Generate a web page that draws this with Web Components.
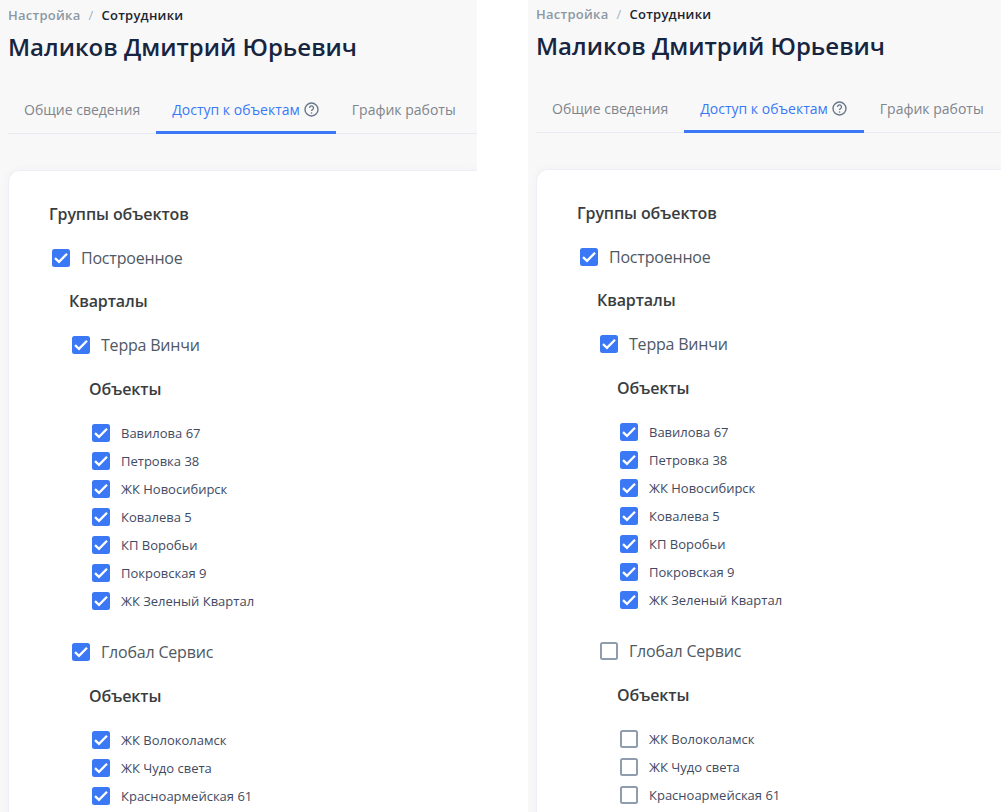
<!DOCTYPE html>
<html lang="ru"><head><meta charset="utf-8"><title>Сотрудники</title>
<style>
html,body{margin:0;padding:0;background:#fff;height:812px;overflow:hidden;font-family:"Open Sans",sans-serif}
#root{display:flex;gap:51px;height:812px;overflow:hidden}
</style></head><body>
<div id="root">
<x-panel></x-panel>
<x-panel second></x-panel>
</div>
<script>
const OBJ1=['Вавилова 67','Петровка 38','ЖК Новосибирск','Ковалева 5','КП Воробьи','Покровская 9','ЖК Зеленый Квартал'];
const OBJ2=['ЖК Волоколамск','ЖК Чудо света','Красноармейская 61'];
class XCheck extends HTMLElement{
  connectedCallback(){
    const s=this.attachShadow({mode:'open'});
    const on=this.hasAttribute('checked');
    const big=this.hasAttribute('big');
    s.innerHTML=`<style>
:host{display:flex;align-items:center;height:28px;color:${big?'#4f5863':'#3f4a63'};font-size:${big?'16px':'13px'};letter-spacing:${big?'-.2px':'0'};line-height:28px;white-space:nowrap}
.b{box-sizing:border-box;width:18px;height:18px;border-radius:2.5px;margin-left:3px;margin-right:11px;flex:none;display:flex;align-items:center;justify-content:center;background:${on?'#3a78f5':'#fff'};border:${on?'0':'2px solid #8f9cae'}}
svg{width:18px;height:18px;display:block}
</style><span class="b">${on?'<svg viewBox="0 0 18 18"><path d="M3 9.2 7 12.8 15 4.8" fill="none" stroke="#fff" stroke-width="2.3"/></svg>':''}</span><slot></slot>`;
  }
}
class XHead extends HTMLElement{
  connectedCallback(){
    this.attachShadow({mode:'open'}).innerHTML=`<style>:host{display:block;font-size:16px;font-weight:600;letter-spacing:-.1px;line-height:24px;color:#3a3d40;white-space:nowrap}</style><slot></slot>`;
  }
}
class XTabs extends HTMLElement{
  connectedCallback(){
    this.attachShadow({mode:'open'}).innerHTML=`<style>
:host{display:flex;height:49px;box-sizing:border-box;border-bottom:1px solid #e9ebf2;font-size:14px;white-space:nowrap;color:#7f858c}
.t{box-sizing:border-box;height:49px;padding:2px 16px 2px;display:flex;align-items:center;gap:4px}
.a{color:#3a78f5;border-bottom:3px solid #3a78f5;padding-bottom:0}
svg{width:15px;height:15px;display:block;margin-right:1px}
</style><div class="t">Общие сведения</div><div class="t a">Доступ к объектам<svg viewBox="0 0 15 15" fill="none" stroke="#69778a"><circle cx="7.5" cy="7.5" r="6.5" stroke-width="1.4"/><path d="M5.6 5.9a1.95 1.95 0 1 1 2.9 1.7c-.7.4-1 .7-1 1.5" stroke-width="1.3"/><circle cx="7.5" cy="11" r=".8" fill="#69778a" stroke="none"/></svg></div><div class="t">График работы</div>`;
  }
}
class XGroup extends HTMLElement{
  connectedCallback(){
    const on=this.getAttribute('state')==='on';
    const items=this.getAttribute('items').split('|');
    const c=on?'checked':'';
    this.attachShadow({mode:'open'}).innerHTML=`<style>
:host{display:block}
x-head{margin:18px 0 0 20px}
.l{display:flex;flex-direction:column;margin:18px 0 0 20px}
</style><x-check big ${c}>${this.getAttribute('name')}</x-check><x-head>Объекты</x-head><div class="l">${items.map(i=>`<x-check ${c}>${i}</x-check>`).join('')}</div>`;
  }
}
class XCard extends HTMLElement{
  connectedCallback(){
    this.attachShadow({mode:'open'}).innerHTML=`<style>
:host{display:block;box-sizing:border-box;background:#fff;border:1px solid #eeeef4;border-right:0;border-radius:12px 0 0 0;padding:31px 0 0 40px;box-shadow:0 0 8px rgba(60,70,100,.04);height:760px}
.top{margin-top:18px}
.q{margin:17px 0 0 20px}
.g{margin:18px 0 0 20px}
</style><x-head>Группы объектов</x-head><x-check class="top" big checked>Построенное</x-check><x-head class="q">Кварталы</x-head><div class="g"><slot></slot></div>`;
  }
}
class XPanel extends HTMLElement{
  connectedCallback(){
    const second=this.hasAttribute('second');
    const s=this.attachShadow({mode:'open'});
    s.innerHTML=`<style>
:host{display:block;width:${second?'473px':'477px'};flex:none;height:812px;overflow:hidden;background:#f8f8f9;box-sizing:border-box;padding:${second?'0':'1px'} 0 0 8px}
.c{font-size:13px;font-weight:600;line-height:28px;height:28px;letter-spacing:.25px;color:#8c98a4;white-space:nowrap}
.c i{font-style:normal;font-weight:400;margin:0 8px;color:#a9b1bb}
.c b{font-weight:600;color:#1c2430}
h1{margin:0;font-size:24px;font-weight:600;line-height:36px;color:#172540;white-space:nowrap}
x-tabs{margin-top:20px}
x-card{margin-top:36px}
.gap{height:23px}
</style><div class="c">Настройка<i>/</i><b>Сотрудники</b></div><h1>Маликов Дмитрий Юрьевич</h1><x-tabs></x-tabs><x-card><x-group name="Терра Винчи" state="on" items="${OBJ1.join('|')}"></x-group><div class="gap"></div><x-group name="Глобал Сервис" state="${second?'off':'on'}" items="${OBJ2.join('|')}"></x-group></x-card>`;
  }
}
customElements.define('x-check',XCheck);
customElements.define('x-head',XHead);
customElements.define('x-tabs',XTabs);
customElements.define('x-group',XGroup);
customElements.define('x-card',XCard);
customElements.define('x-panel',XPanel);
</script>
</body></html>
